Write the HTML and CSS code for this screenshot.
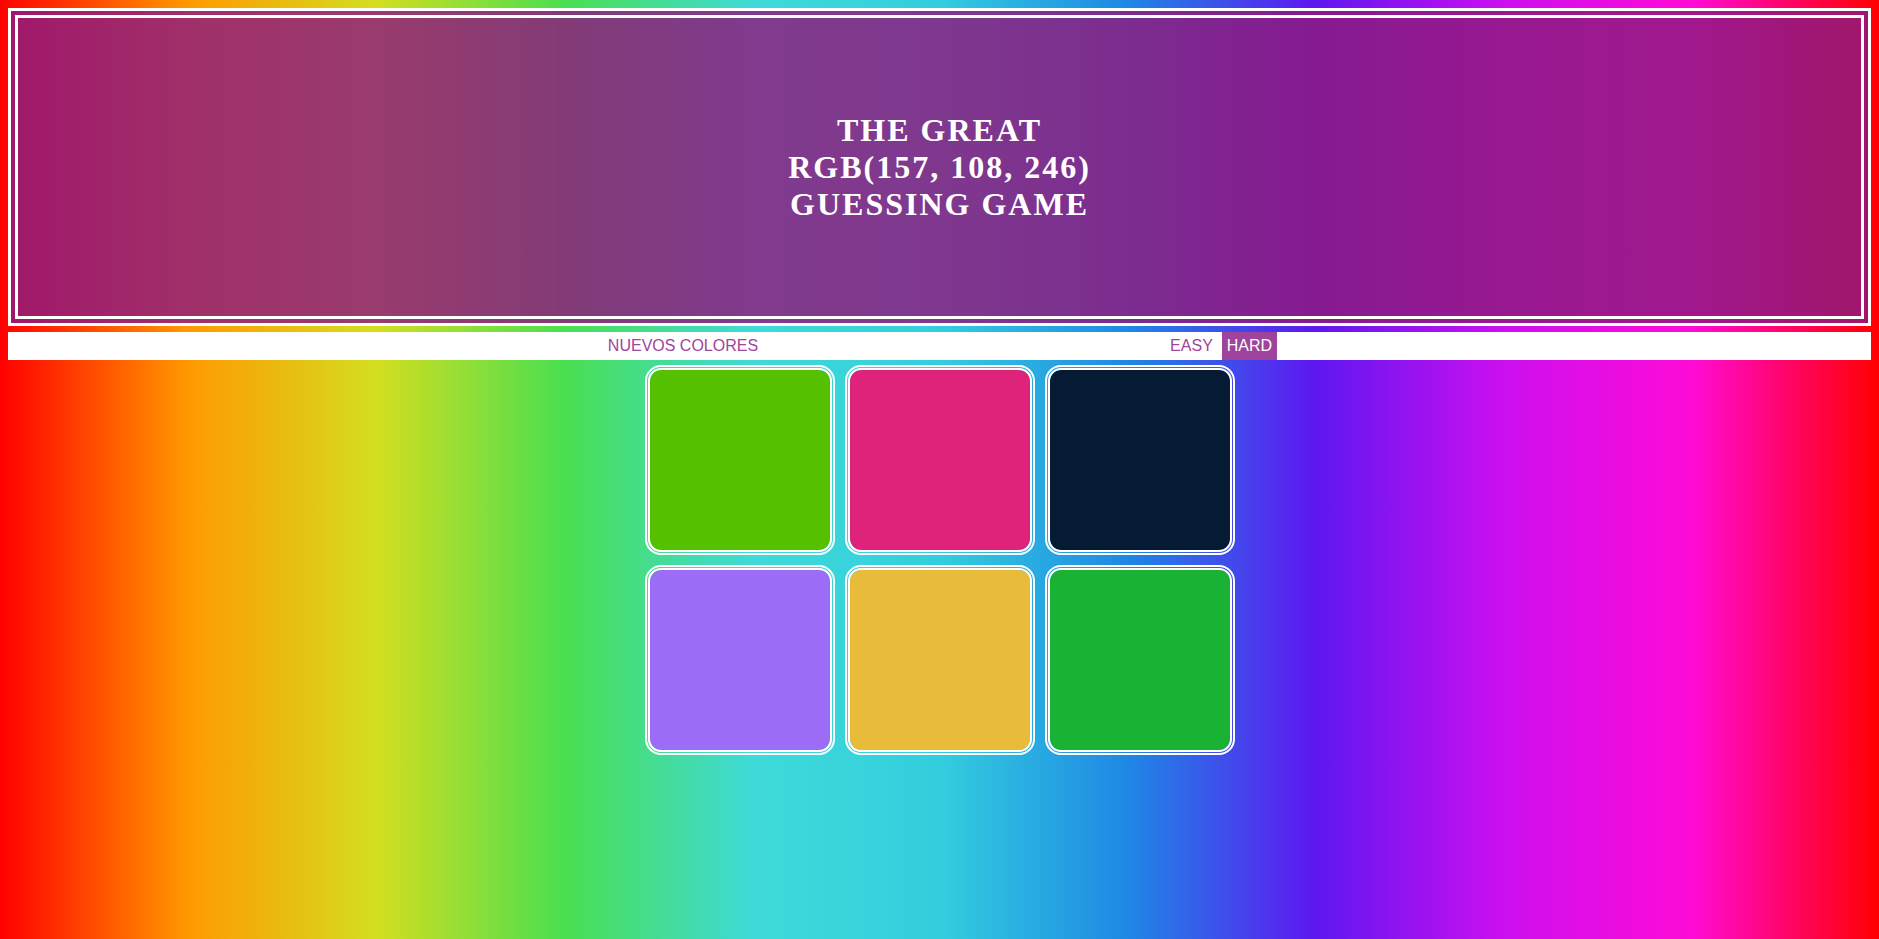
FILE: index.html
```html
<!DOCTYPE html>
<html lang="es">
<head>
<meta charset="utf-8">
<title>The Great RGB Guessing Game</title>
<link rel="stylesheet" href="styles.css">
</head>
<body>
<h1 class="title"><span class="title-text">THE GREAT<br>RGB(157, 108, 246)<br>GUESSING GAME</span></h1>
<div class="stripe">
  <button class="btn reset">NUEVOS COLORES</button>
  <span class="message"></span>
  <button class="btn mode">EASY</button>
  <button class="btn mode selected">HARD</button>
</div>
<div class="board">
  <div class="square sq-1"></div>
  <div class="square sq-2"></div>
  <div class="square sq-3"></div>
  <div class="square sq-4"></div>
  <div class="square sq-5"></div>
  <div class="square sq-6"></div>
</div>
</body>
</html>
```
FILE: styles.css
```css
html {
  background: linear-gradient(to right,
    #ff0000 0%,
    #ff9900 10%,
    #d4de1f 20%,
    #4adf50 30%,
    #3fdad8 40%,
    #33cede 50%,
    #1e88e5 60%,
    #5e17f0 70%,
    #cc0fef 80%,
    #ff0bd6 90%,
    #ff0000 100%);
  min-height: 100%;
}

body {
  margin: 8px;
  font-family: "Liberation Sans", Arial, sans-serif;
}

.title {
  margin: 0;
  box-sizing: border-box;
  height: 318px;
  border: 10px double #ffffff;
  background: rgba(142, 27, 126, 0.84);
  color: #ffffff;
  font-family: "Liberation Serif", "Times New Roman", serif;
  font-weight: 700;
  font-size: 32px;
  letter-spacing: 2px;
  line-height: 37px;
  text-align: center;
  display: flex;
  align-items: center;
  justify-content: center;
}

.title-text {
  display: block;
}

.stripe {
  margin-top: 6px;
  height: 28px;
  background: #ffffff;
  display: flex;
  justify-content: center;
  align-items: stretch;
  gap: 4px;
}

.btn {
  border: none;
  background: none;
  margin: 0;
  padding: 0 6px;
  font-family: "Liberation Sans", Arial, sans-serif;
  font-size: 16px;
  color: #9f449c;
  cursor: pointer;
  line-height: 28px;
}

.mode {
  padding: 0 5px;
}

.selected {
  background: #9f449c;
  color: #ffffff;
}

.message {
  width: 393px;
}

.board {
  width: 590px;
  margin: 5px auto 0;
  display: grid;
  grid-template-columns: repeat(3, 190px);
  column-gap: 10px;
  row-gap: 10px;
}

.square {
  box-sizing: border-box;
  height: 190px;
  border: 5px double #ffffff;
  border-radius: 16px;
  background-clip: padding-box;
}

.sq-1 { background-color: #54c000; }
.sq-2 { background-color: #e0237a; }
.sq-3 { background-color: #041b33; }
.sq-4 { background-color: rgb(157, 108, 246); }
.sq-5 { background-color: #e8bb3b; }
.sq-6 { background-color: #1ab234; }
```
